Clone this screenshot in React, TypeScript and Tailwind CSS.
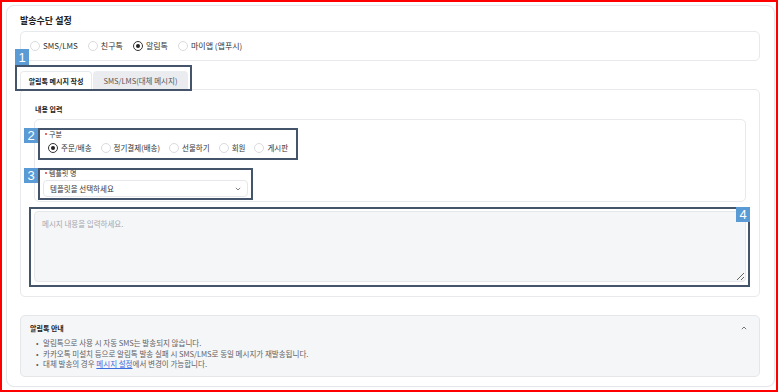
import clsx from 'clsx';

function Radio({ label, checked }: { label: string; checked?: boolean }) {
  return (
    <label className="flex items-center gap-[3px]">
      <span
        className={clsx(
          'flex h-[10px] w-[10px] items-center justify-center rounded-full border bg-white',
          checked ? 'border-[#333333]' : 'border-[#d9dbe0]'
        )}
      >
        {checked && <span className="h-[4px] w-[4px] rounded-full bg-[#222222]" />}
      </span>
      <span>{label}</span>
    </label>
  );
}

function Tag({ n, className }: { n: string; className: string }) {
  return (
    <span
      className={clsx(
        "absolute flex h-[15px] w-[14px] items-center justify-center bg-[#5b9bd5] font-['Liberation_Sans',sans-serif] text-[13px] leading-none text-white",
        className
      )}
    >
      {n}
    </span>
  );
}

export default function App() {
  const channels = ['SMS/LMS', '친구톡', '알림톡', '마이앱 (앱푸시)'];
  const kinds = ['주문/배송', '정기결제(배송)', '선물하기', '회원', '게시판'];

  return (
    <div className="h-[392px] w-[778px] border-2 border-[#ff0000] bg-white font-['Noto_Sans_CJK_KR','Noto_Sans',sans-serif] text-[#333333]">
      <div className="ml-[4px] mt-[3px] h-[382px] w-[769px] rounded-[8px] border border-[#e4e6ea] pl-[13px] pr-[14px] pt-[8px] shadow-[0_0_2px_rgba(0,0,0,0.06)]">
        {/* 발송수단 */}
        <h2 className="text-[9px] font-bold leading-[13px] text-[#222222]">발송수단 설정</h2>
        <div className="mt-[4px] flex h-[30px] items-center gap-[10px] rounded-[5px] border border-[#e8e9ec] pl-[9px] text-[8px]">
          {channels.map((c) => (
            <Radio key={c} label={c} checked={c === '알림톡'} />
          ))}
        </div>

        {/* tabs */}
        <div className="relative mt-[10px] flex gap-[1px] leading-none">
          <div className="flex h-[19px] w-[72px] items-center justify-center rounded-t-[4px] border border-b-0 border-[#e8e9ec] bg-white text-[7px] font-bold text-[#222222]">
            알림톡 메시지 작성
          </div>
          <div className="flex h-[19px] w-[95px] items-center justify-center rounded-t-[4px] bg-[#ebecf0] text-[7.5px] text-[#555555]">
            SMS/LMS(대체 메시지)
          </div>
          <span className="absolute left-[-5px] top-[-6px] h-[26px] w-[177px] border-2 border-[#44546a]" />
          <Tag n="1" className="left-[-5px] top-[-22px] h-[16px]" />
        </div>

        {/* 내용 입력 */}
        <div className="-mt-[1px] h-[208px] rounded-[5px] border border-[#e8e9ec] px-[13px] pt-[13px]">
          <h3 className="pl-[1px] text-[7px] font-bold leading-[12px] text-[#222222]">내용 입력</h3>
          <div className="mt-[4px] h-[83px] rounded-[5px] border border-[#e8e9ec] pl-[8px] pt-[9px] text-[7.5px]">
            <div className="relative">
              <div className="flex items-center gap-[2px] pl-[2px] text-[7px] leading-[10px]">
                <span className="h-[2px] w-[2px] rounded-full bg-[#e53935]" />
                <span>구분</span>
              </div>
              <div className="mt-[4px] flex h-[10px] items-center gap-[9px] pl-[5px]">
                {kinds.map((k) => (
                  <Radio key={k} label={k} checked={k === '주문/배송'} />
                ))}
              </div>
              <span className="absolute left-[-5px] top-[-1px] h-[32px] w-[260px] border-2 border-[#44546a]" />
              <Tag n="2" className="left-[-19px] top-[-1px]" />
            </div>

            <div className="relative mt-[15px]">
              <div className="flex items-center gap-[2px] pl-[2px] text-[7px] leading-[10px]">
                <span className="h-[2px] w-[2px] rounded-full bg-[#e53935]" />
                <span>템플릿 명</span>
              </div>
              <div className="mt-[2px] flex h-[17px] w-[205px] items-center justify-between rounded-[4px] border border-[#e6e7ea] bg-white pl-[6px] pr-[6px]">
                <span>템플릿을 선택하세요</span>
                <svg width="6" height="4" viewBox="0 0 6 4" fill="none">
                  <path d="M0.8 0.8 L3 3 L5.2 0.8" stroke="#777777" strokeWidth="0.9" />
                </svg>
              </div>
              <span className="absolute left-[-5px] top-0 h-[32px] w-[215px] border-2 border-[#44546a]" />
              <Tag n="3" className="left-[-19px] top-0" />
            </div>
          </div>

          <div className="relative mt-[9px]">
            <textarea
              placeholder="메시지 내용을 입력하세요."
              className="block h-[71px] w-full resize-y rounded-[4px] border border-[#e6e7ea] bg-[#f5f6f8] px-[7px] py-[7px] text-[7.5px] leading-[10px] placeholder:text-[#a5a7ac]"
            />
            <span className="pointer-events-none absolute left-[-5px] top-[-4px] h-[80px] w-[721px] border-2 border-[#44546a]" />
            <Tag n="4" className="right-[-4px] top-[-4px]" />
          </div>
        </div>

        {/* 안내 */}
        <div className="mt-[18px] h-[62px] rounded-[5px] border border-[#e4e6ea] bg-[#f5f6f8] pl-[9px] pr-[12px] pt-[7px] text-[7.5px]">
          <div className="flex items-center justify-between leading-[10px]">
            <span className="text-[7px] font-bold text-[#222222]">알림톡 안내</span>
            <svg width="6" height="4" viewBox="0 0 6 4" fill="none">
              <path d="M0.8 3.2 L3 1 L5.2 3.2" stroke="#666666" strokeWidth="0.9" />
            </svg>
          </div>
          <ul className="mt-[5px] leading-[10.5px] text-[#5e5f63]">
            <li className="flex">
              <span className="w-[13px] pl-[6px]">•</span>알림톡으로 사용 시 자동 SMS는 발송되지 않습니다.
            </li>
            <li className="flex">
              <span className="w-[13px] pl-[6px]">•</span>카카오톡 미설치 등으로 알림톡 발송 실패 시 SMS/LMS로 동일 메시지가 재발송됩니다.
            </li>
            <li className="flex">
              <span className="w-[13px] pl-[6px]">•</span>대체 발송의 경우&nbsp;
              <a className="text-[#3b6fe0] underline">메시지 설정</a>에서 변경이 가능합니다.
            </li>
          </ul>
        </div>
      </div>
    </div>
  );
}
